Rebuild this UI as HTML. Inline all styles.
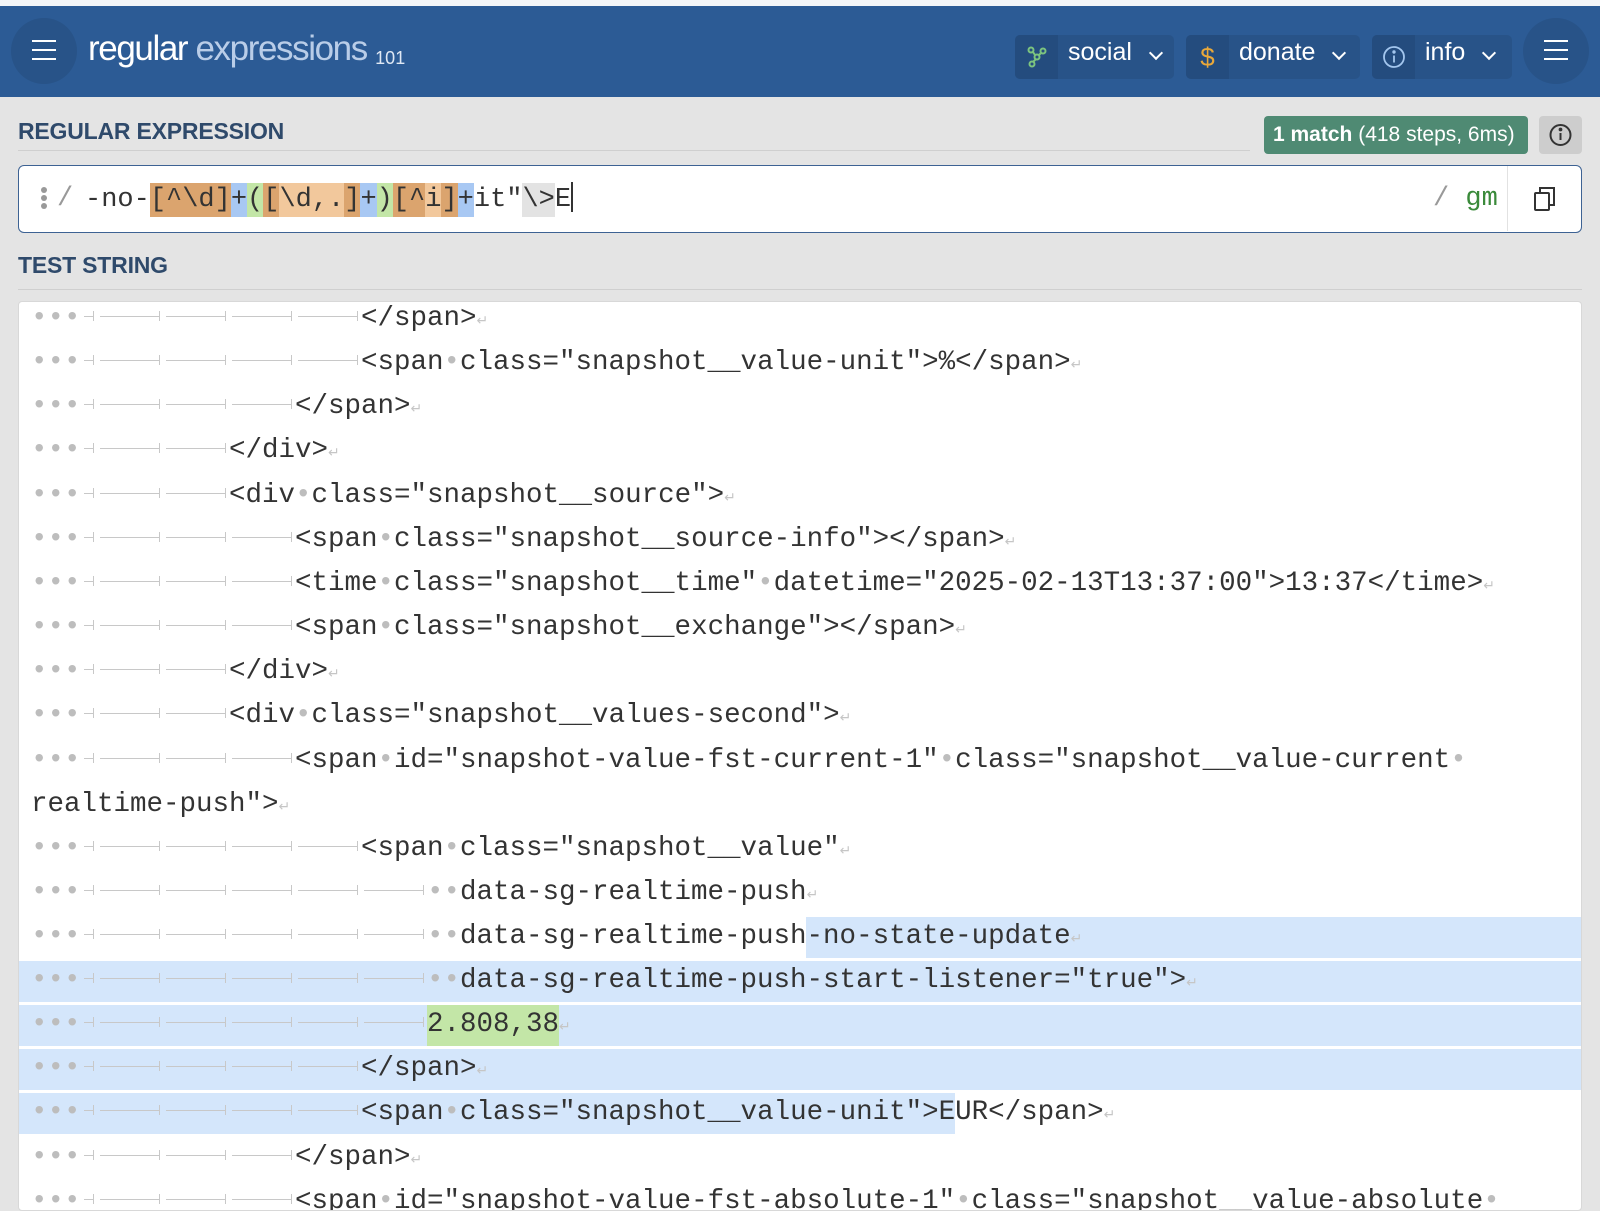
<!DOCTYPE html>
<html><head><meta charset="utf-8">
<style>
*{box-sizing:border-box;margin:0;padding:0}
body{width:1600px;height:1198px;overflow:hidden;background:#e4e4e4;font-family:"Liberation Sans",sans-serif;position:relative}
.top{position:absolute;left:0;top:0;width:1600px;height:6px;background:#f3f5f8}
.hdr{position:absolute;left:0;top:6px;width:1600px;height:91px;background:#2c5b95}
.circ{position:absolute;width:66px;height:66px;border-radius:50%;background:#285388}
.ham{position:absolute;left:21px;top:22px;width:24px;height:20px;border-top:2.5px solid #fff;border-bottom:2.5px solid #fff}
.ham:after{content:"";position:absolute;left:0;right:0;top:6.5px;border-top:2.5px solid #fff}
.logo{position:absolute;left:88px;top:23px;color:#fff;font-size:35px;letter-spacing:-1.4px;white-space:nowrap}
.logo .e{color:#b9cde8}
.logo sub{font-size:18px;letter-spacing:0;vertical-align:-4px;color:#dfe8f4}
.btn{position:absolute;top:29px;height:44px;background:#285388;border-radius:5px;color:#fff;font-size:25px;line-height:44px}
.btn .ic{position:absolute;left:0;top:0;width:43px;height:44px;background:#244c7e;border-radius:5px 0 0 5px;text-align:center}
.btn .lb{position:absolute;left:53px;top:-5px}
.chev{position:absolute;top:13px;width:10px;height:10px;border-right:2.5px solid #fff;border-bottom:2.5px solid #fff;transform:rotate(45deg)}
.lab{position:absolute;left:18px;color:#2f4a6b;font-size:23px;font-weight:bold;letter-spacing:-0.2px}
.rule{position:absolute;left:18px;height:1px;background:#cfcfcf}
.badge{position:absolute;left:1264px;top:116px;width:264px;height:38px;background:#4f8a73;border-radius:4px;color:#fff;font-size:21px;line-height:38px;padding-left:9px;white-space:nowrap}
.ibtn{position:absolute;left:1539px;top:116px;width:43px;height:38px;background:#cdcdcd;border-radius:4px}
.inp{position:absolute;left:18px;top:165px;width:1564px;height:68px;background:#fff;border:1.5px solid #3d6293;border-radius:6px}
.mono{font-family:"Liberation Mono",monospace}
.rx{position:absolute;left:66px;top:16px;font-size:27px;line-height:34px;color:#333;white-space:pre}
.rx span{display:inline-block;height:34px}
.o{background:#dba46e}.lo{background:#f2c89c}.b{background:#a8c8f3}.g{background:#c3e6a7}.gr{background:#e3e3e3}
.cursor{display:inline-block;width:2px;height:30px;background:#333;vertical-align:-6px}
.ts{position:absolute;left:18px;top:301px;width:1564px;height:910px;background:#fff;border:1px solid #d8d8d8;border-radius:4px;overflow:hidden}
.row{position:absolute;left:0;width:1560px;height:44px;line-height:44px;font-size:27.5px;color:#333;white-space:pre;padding-left:12px}
.hl{position:absolute;height:41px;background:#d4e6fb}
.hg{position:absolute;height:41px;background:#c3e6a7}
.s{display:inline-block;width:0.6em;text-align:center;color:#bdbdbd}
.t{display:inline-block;position:relative;height:10px;vertical-align:4px}
.t:before{content:"";position:absolute;left:3px;right:4px;top:5px;border-top:1.5px solid #c8c8c8}
.t:after{content:"";position:absolute;right:3px;top:0;height:10px;border-right:1.5px solid #c8c8c8}
.t1{width:0.6em}.t4{width:2.4em}
.nl{color:#c6c6c6;font-size:14px;font-family:"DejaVu Sans",sans-serif}
</style></head><body>
<div class="top"></div>
<div class="hdr">
  <div class="circ" style="left:11px;top:12px"><div class="ham"></div></div>
  <div class="logo">regular <span class="e">expressions</span> <sub>101</sub></div>
  <div class="btn" style="left:1015px;width:159px"><div class="ic"><svg width="22" height="22" viewBox="0 0 22 22" style="margin-top:11px" fill="none" stroke="#7cc47f" stroke-width="2"><circle cx="5" cy="4" r="2.5"/><circle cx="17" cy="5" r="2.5"/><circle cx="6" cy="18" r="2.5"/><circle cx="11" cy="11" r="2.5"/><path d="M7 6l2 3M15 7l-2 2M10 13l-3 3"/></svg></div><span class="lb">social</span><div class="chev" style="left:136px"></div></div>
  <div class="btn" style="left:1186px;width:174px"><div class="ic" style="color:#e9a83a;font-size:26px">$</div><span class="lb">donate</span><div class="chev" style="left:148px"></div></div>
  <div class="btn" style="left:1372px;width:140px"><div class="ic"><svg width="24" height="24" viewBox="0 0 24 24" style="margin-top:10px" fill="none" stroke="#a3c6ee" stroke-width="1.8"><circle cx="12" cy="12" r="10"/><path d="M12 10.5v7"/><circle cx="12" cy="7" r="0.8" fill="#a3c6ee"/></svg></div><span class="lb">info</span><div class="chev" style="left:112px"></div></div>
  <div class="circ" style="left:1523px;top:12px"><div class="ham"></div></div>
</div>
<div class="lab" style="top:118px">REGULAR EXPRESSION</div>
<div class="rule" style="top:150px;width:1232px"></div>
<div class="badge"><b>1 match</b> (418 steps, 6ms)</div>
<div class="ibtn"><svg width="43" height="38" viewBox="0 0 43 38" fill="none" stroke="#333" stroke-width="2"><circle cx="21.5" cy="19" r="10"/><path d="M21.5 17v7"/><circle cx="21.5" cy="13.5" r="0.9" fill="#333"/></svg></div>
<div class="inp">
  <svg style="position:absolute;left:21px;top:20px" width="8" height="26"><circle cx="4" cy="4" r="3" fill="#999"/><circle cx="4" cy="12" r="3" fill="#999"/><circle cx="4" cy="20" r="3" fill="#999"/></svg>
  <div class="mono" style="position:absolute;left:38px;top:16px;font-size:27px;line-height:34px;color:#999">/</div>
  <div class="rx mono">-no-<span class="o">[^\d]</span><span class="b">+</span><span class="g">(</span><span class="o">[</span><span class="lo">\d,.</span><span class="o">]</span><span class="b">+</span><span class="g">)</span><span class="o">[^</span><span class="lo">i</span><span class="o">]</span><span class="b">+</span>it"<span class="gr">\&gt;</span>E<i class="cursor"></i></div>
  <div class="mono" style="position:absolute;left:1414px;top:16px;font-size:27px;line-height:34px;color:#999">/ <span style="color:#3a8a3a">gm</span></div>
  <div style="position:absolute;left:1488px;top:0;width:1px;height:65px;background:#e2e2e2"></div>
  <svg style="position:absolute;left:1514px;top:19px" width="26" height="28" fill="none" stroke="#333" stroke-width="2"><rect x="2" y="8" width="14" height="17" rx="1"/><path d="M7 8V3h14v17h-5"/></svg>
</div>
<div class="lab" style="top:252px">TEST STRING</div>
<div class="rule" style="top:289px;width:1564px"></div>
<div class="ts mono">
  <div class="hl" style="left:787px;right:0;top:615px"></div>
  <div class="hl" style="left:0;right:0;top:659px"></div>
  <div class="hl" style="left:0;right:0;top:703px"></div>
  <div class="hg" style="left:408px;width:132px;top:703px"></div>
  <div class="hl" style="left:0;right:0;top:747px"></div>
  <div class="hl" style="left:0;width:936px;top:791px"></div>

  <div class="row" style="top:-5px"><span class="s">•</span><span class="s">•</span><span class="s">•</span><span class="t t1"></span><span class="t t4"></span><span class="t t4"></span><span class="t t4"></span><span class="t t4"></span>&lt;/span&gt;<span class="nl">↵</span></div>
  <div class="row" style="top:39px"><span class="s">•</span><span class="s">•</span><span class="s">•</span><span class="t t1"></span><span class="t t4"></span><span class="t t4"></span><span class="t t4"></span><span class="t t4"></span>&lt;span<span class="s">•</span>class="snapshot__value-unit"&gt;%&lt;/span&gt;<span class="nl">↵</span></div>
  <div class="row" style="top:83px"><span class="s">•</span><span class="s">•</span><span class="s">•</span><span class="t t1"></span><span class="t t4"></span><span class="t t4"></span><span class="t t4"></span>&lt;/span&gt;<span class="nl">↵</span></div>
  <div class="row" style="top:127px"><span class="s">•</span><span class="s">•</span><span class="s">•</span><span class="t t1"></span><span class="t t4"></span><span class="t t4"></span>&lt;/div&gt;<span class="nl">↵</span></div>
  <div class="row" style="top:172px"><span class="s">•</span><span class="s">•</span><span class="s">•</span><span class="t t1"></span><span class="t t4"></span><span class="t t4"></span>&lt;div<span class="s">•</span>class="snapshot__source"&gt;<span class="nl">↵</span></div>
  <div class="row" style="top:216px"><span class="s">•</span><span class="s">•</span><span class="s">•</span><span class="t t1"></span><span class="t t4"></span><span class="t t4"></span><span class="t t4"></span>&lt;span<span class="s">•</span>class="snapshot__source-info"&gt;&lt;/span&gt;<span class="nl">↵</span></div>
  <div class="row" style="top:260px"><span class="s">•</span><span class="s">•</span><span class="s">•</span><span class="t t1"></span><span class="t t4"></span><span class="t t4"></span><span class="t t4"></span>&lt;time<span class="s">•</span>class="snapshot__time"<span class="s">•</span>datetime="2025-02-13T13:37:00"&gt;13:37&lt;/time&gt;<span class="nl">↵</span></div>
  <div class="row" style="top:304px"><span class="s">•</span><span class="s">•</span><span class="s">•</span><span class="t t1"></span><span class="t t4"></span><span class="t t4"></span><span class="t t4"></span>&lt;span<span class="s">•</span>class="snapshot__exchange"&gt;&lt;/span&gt;<span class="nl">↵</span></div>
  <div class="row" style="top:348px"><span class="s">•</span><span class="s">•</span><span class="s">•</span><span class="t t1"></span><span class="t t4"></span><span class="t t4"></span>&lt;/div&gt;<span class="nl">↵</span></div>
  <div class="row" style="top:392px"><span class="s">•</span><span class="s">•</span><span class="s">•</span><span class="t t1"></span><span class="t t4"></span><span class="t t4"></span>&lt;div<span class="s">•</span>class="snapshot__values-second"&gt;<span class="nl">↵</span></div>
  <div class="row" style="top:437px"><span class="s">•</span><span class="s">•</span><span class="s">•</span><span class="t t1"></span><span class="t t4"></span><span class="t t4"></span><span class="t t4"></span>&lt;span<span class="s">•</span>id="snapshot-value-fst-current-1"<span class="s">•</span>class="snapshot__value-current<span class="s">•</span></div>
  <div class="row" style="top:481px">realtime-push"&gt;<span class="nl">↵</span></div>
  <div class="row" style="top:525px"><span class="s">•</span><span class="s">•</span><span class="s">•</span><span class="t t1"></span><span class="t t4"></span><span class="t t4"></span><span class="t t4"></span><span class="t t4"></span>&lt;span<span class="s">•</span>class="snapshot__value"<span class="nl">↵</span></div>
  <div class="row" style="top:569px"><span class="s">•</span><span class="s">•</span><span class="s">•</span><span class="t t1"></span><span class="t t4"></span><span class="t t4"></span><span class="t t4"></span><span class="t t4"></span><span class="t t4"></span><span class="s">•</span><span class="s">•</span>data-sg-realtime-push<span class="nl">↵</span></div>
  <div class="row" style="top:613px"><span class="s">•</span><span class="s">•</span><span class="s">•</span><span class="t t1"></span><span class="t t4"></span><span class="t t4"></span><span class="t t4"></span><span class="t t4"></span><span class="t t4"></span><span class="s">•</span><span class="s">•</span>data-sg-realtime-push-no-state-update<span class="nl">↵</span></div>
  <div class="row" style="top:657px"><span class="s">•</span><span class="s">•</span><span class="s">•</span><span class="t t1"></span><span class="t t4"></span><span class="t t4"></span><span class="t t4"></span><span class="t t4"></span><span class="t t4"></span><span class="s">•</span><span class="s">•</span>data-sg-realtime-push-start-listener="true"&gt;<span class="nl">↵</span></div>
  <div class="row" style="top:701px"><span class="s">•</span><span class="s">•</span><span class="s">•</span><span class="t t1"></span><span class="t t4"></span><span class="t t4"></span><span class="t t4"></span><span class="t t4"></span><span class="t t4"></span>2.808,38<span class="nl">↵</span></div>
  <div class="row" style="top:745px"><span class="s">•</span><span class="s">•</span><span class="s">•</span><span class="t t1"></span><span class="t t4"></span><span class="t t4"></span><span class="t t4"></span><span class="t t4"></span>&lt;/span&gt;<span class="nl">↵</span></div>
  <div class="row" style="top:789px"><span class="s">•</span><span class="s">•</span><span class="s">•</span><span class="t t1"></span><span class="t t4"></span><span class="t t4"></span><span class="t t4"></span><span class="t t4"></span>&lt;span<span class="s">•</span>class="snapshot__value-unit"&gt;EUR&lt;/span&gt;<span class="nl">↵</span></div>
  <div class="row" style="top:834px"><span class="s">•</span><span class="s">•</span><span class="s">•</span><span class="t t1"></span><span class="t t4"></span><span class="t t4"></span><span class="t t4"></span>&lt;/span&gt;<span class="nl">↵</span></div>
  <div class="row" style="top:878px"><span class="s">•</span><span class="s">•</span><span class="s">•</span><span class="t t1"></span><span class="t t4"></span><span class="t t4"></span><span class="t t4"></span>&lt;span<span class="s">•</span>id="snapshot-value-fst-absolute-1"<span class="s">•</span>class="snapshot__value-absolute<span class="s">•</span></div>
</div>
</body></html>
